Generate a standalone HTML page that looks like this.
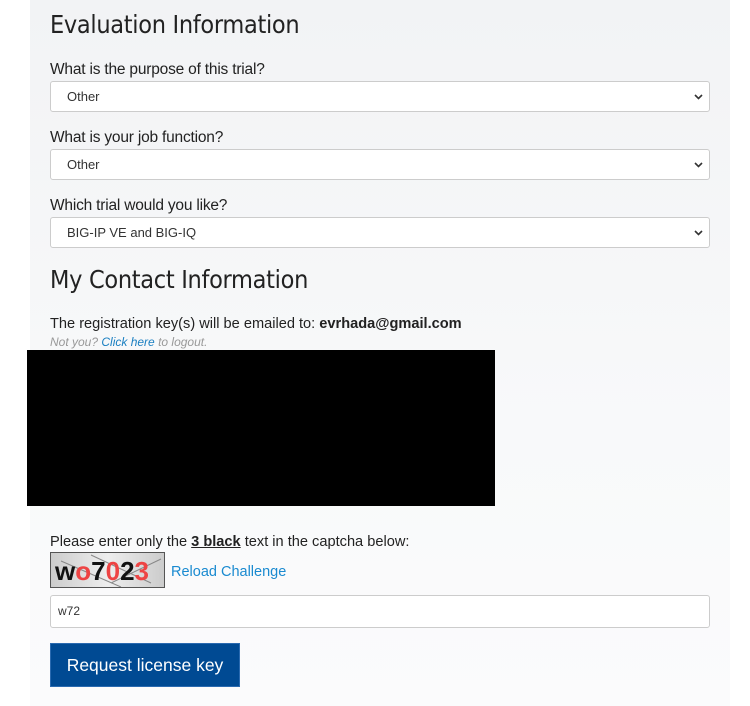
<!DOCTYPE html>
<html><head><meta charset="utf-8"><style>
body{margin:0;width:750px;height:706px;background:#fff;font-family:"Liberation Sans",sans-serif;position:relative;overflow:hidden}
.panel{position:absolute;left:30px;top:0;width:700px;height:706px;background:linear-gradient(#f2f3f5,#f8f9fa 60%,#fbfbfc)}
.a{position:absolute}
h2{margin:0;font-weight:normal;font-size:25px;color:#222;position:absolute;left:50px;font-family:"DejaVu Sans Condensed","Liberation Sans Narrow","Liberation Sans",sans-serif;letter-spacing:-0.3px}
.lbl{position:absolute;left:50px;font-size:14.6px;color:#222}
.q{font-size:15.5px;letter-spacing:-0.2px}
.sel{position:absolute;left:50px;width:660px;height:31px;background:#fff;border:1px solid #ccc;border-radius:3px;font-size:13px;color:#333;box-sizing:border-box;padding-left:16px;line-height:29px}
.sel svg{position:absolute;right:6px;top:12px}
</style></head><body>
<div class="panel"></div>
<h2 style="top:10px">Evaluation Information</h2>
<div class="lbl q" style="top:61px">What is the purpose of this trial?</div>
<div class="sel" style="top:81px">Other<svg width="9" height="6" viewBox="0 0 9 6"><path d="M1 1l3.5 3.5L8 1" stroke="#333" stroke-width="1.6" fill="none"/></svg></div>
<div class="lbl q" style="top:129px">What is your job function?</div>
<div class="sel" style="top:149px">Other<svg width="9" height="6" viewBox="0 0 9 6"><path d="M1 1l3.5 3.5L8 1" stroke="#333" stroke-width="1.6" fill="none"/></svg></div>
<div class="lbl q" style="top:197px">Which trial would you like?</div>
<div class="sel" style="top:217px">BIG-IP VE and BIG-IQ<svg width="9" height="6" viewBox="0 0 9 6"><path d="M1 1l3.5 3.5L8 1" stroke="#333" stroke-width="1.6" fill="none"/></svg></div>
<h2 style="top:265px">My Contact Information</h2>
<div class="lbl" style="top:316px">The registration key(s) will be emailed to: <b>evrhada@gmail.com</b></div>
<div class="a" style="left:50px;top:335px;font-size:12px;font-style:italic;color:#999">Not you? <span style="color:#1a7fc1">Click here</span> to logout.</div>
<div class="a" style="left:27px;top:350px;width:468px;height:156px;background:#000"></div>
<div class="lbl" style="top:534px">Please enter only the <b style="text-decoration:underline">3 black</b> text in the captcha below:</div>
<div class="a" style="left:50px;top:552px;width:115px;height:36px;border:1px solid #555;background:linear-gradient(90deg,#ccc,#eee,#ccc);box-sizing:border-box;overflow:hidden">
<svg width="115" height="36" style="position:absolute;left:0;top:0"><path d="M10 8L70 34M40 2L100 30M60 30L110 6" stroke="#888" stroke-width="1"/></svg>
<span class="a" style="left:4px;top:3px;font-size:26px;font-weight:bold;white-space:nowrap"><span style="color:#111">w</span><span style="color:#e44">o</span><span style="color:#111">7</span><span style="color:#e44">0</span><span style="color:#111">2</span><span style="color:#e44">3</span></span></div>
<div class="a" style="left:171px;top:564px;font-size:14.5px;color:#1a8ad0">Reload Challenge</div>
<div class="a" style="left:50px;top:595px;width:660px;height:33px;background:#fff;border:1px solid #ccc;border-radius:3px;box-sizing:border-box;font-size:12px;color:#333;padding-left:7px;line-height:31px">w72</div>
<div class="a" style="left:50px;top:643px;width:190px;height:44px;background:#004a93;border:1px solid #2a6ab0;box-sizing:border-box;color:#fff;font-size:17.5px;text-align:center;line-height:42px">Request license key</div>
</body></html>
